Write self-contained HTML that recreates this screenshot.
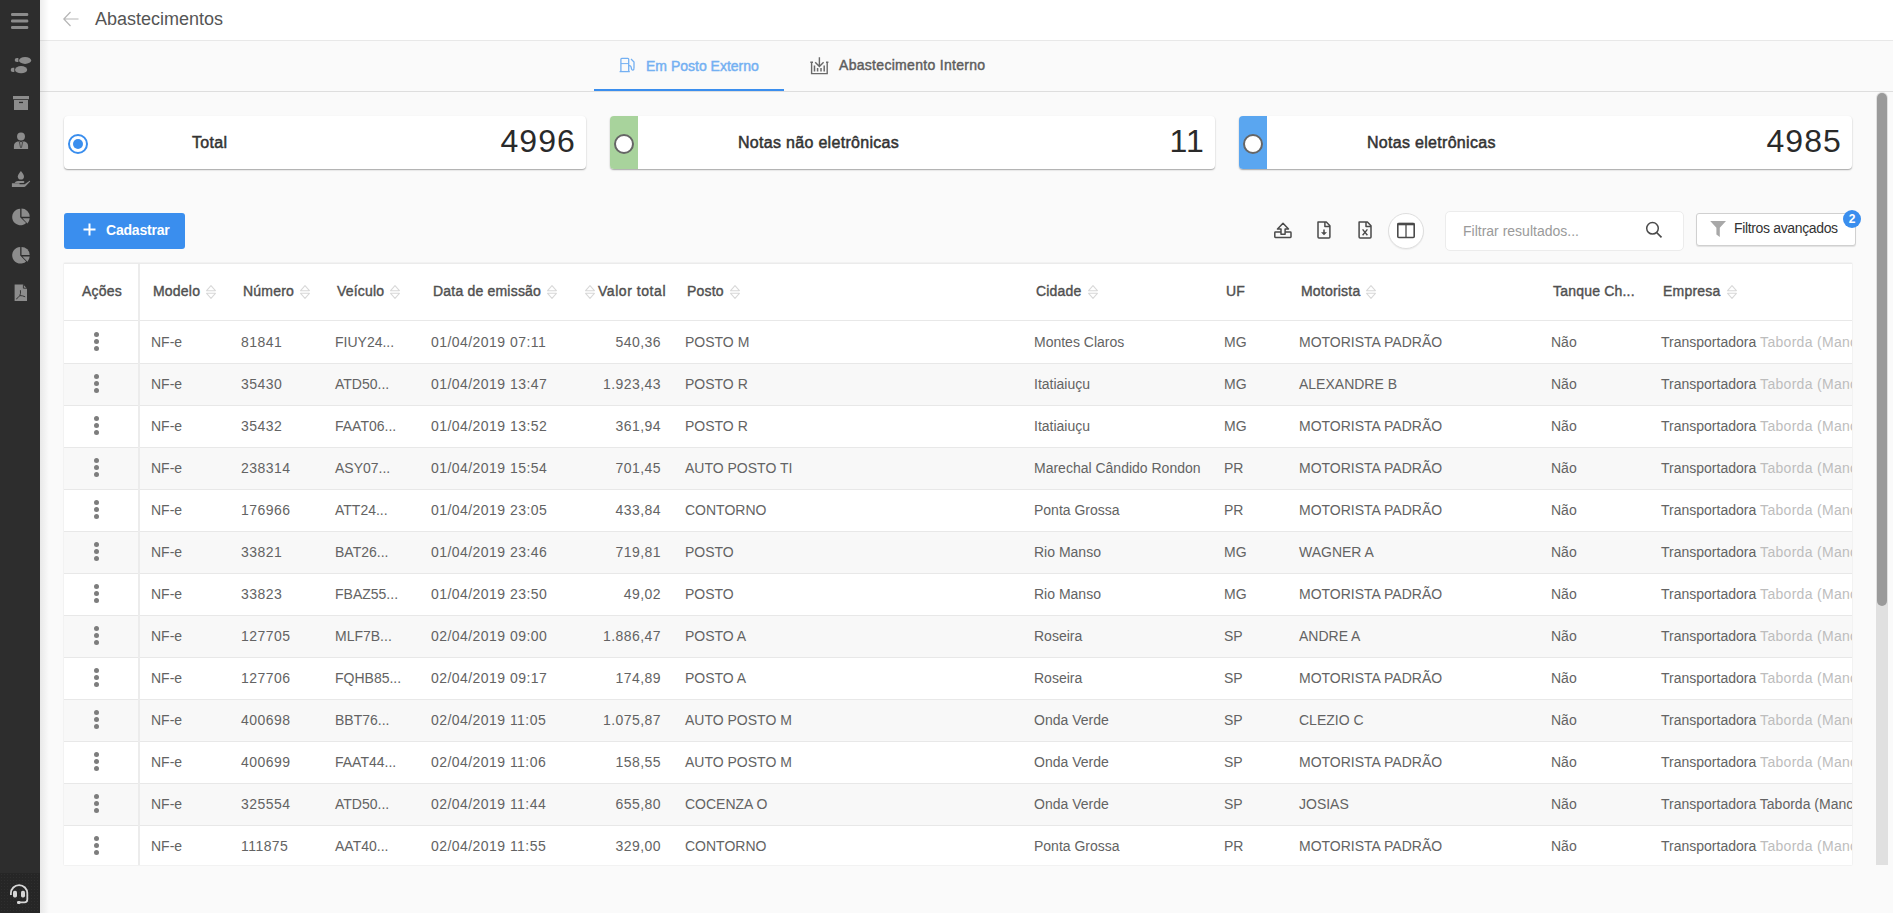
<!DOCTYPE html>
<html><head><meta charset="utf-8">
<style>
*{box-sizing:border-box;margin:0;padding:0}
html,body{width:1893px;height:913px;overflow:hidden;background:#fafafa;font-family:"Liberation Sans",sans-serif;color:#555}
.abs{position:absolute}
#side{left:0;top:0;width:40px;height:913px;background:#2d2d2d}
#side svg{position:absolute}
#sidebot{left:0;top:873px;width:40px;height:40px;background-color:#262626;background-image:radial-gradient(rgba(255,255,255,.045) 0.6px,transparent 0.7px);background-size:3px 3px}
#sideshadow{z-index:10;left:40px;top:0;width:9px;height:913px;background:linear-gradient(to right,rgba(0,0,0,.07),rgba(0,0,0,0))}
#header{left:40px;top:0;width:1853px;height:41px;background:#fff;border-bottom:1px solid #e8e8e8}
#title{left:95px;top:8px;font-size:18px;color:#555;line-height:22px}
#tabs{left:40px;top:41px;width:1853px;height:51px;border-bottom:1px solid #dedede}
.tab{position:absolute;font-size:14px;font-weight:normal;-webkit-text-stroke:0.45px currentColor;line-height:16px;white-space:nowrap}
.card{position:absolute;background:#fff;border-radius:4px;box-shadow:0 1px 1.5px rgba(0,0,0,.35);overflow:hidden}
.strip{position:absolute;left:0;top:0;width:28px;height:100%}
.radio{position:absolute;left:4px;top:18px;width:20px;height:20px;border-radius:50%;border:2px solid #666;background:#fff}
.radio.on{border-color:#3a8eee}
.radio.on:after{content:"";position:absolute;left:3px;top:3px;width:10px;height:10px;border-radius:50%;background:#3a8eee}
.ctitle{position:absolute;left:128px;top:18px;font-size:16px;font-weight:normal;-webkit-text-stroke:0.5px currentColor;letter-spacing:0.3px;color:#333;line-height:18px;white-space:nowrap}
.cnum{position:absolute;right:10px;top:7px;font-size:32px;color:#2a2a2a;line-height:36px;letter-spacing:1.1px}
#btn{left:64px;top:213px;width:121px;height:36px;background:#3a8eee;border-radius:3px;color:#fff;font-weight:bold;font-size:14px}
#table{left:64px;top:263px;width:1788px;height:602px;background:#fff;overflow:hidden;box-shadow:0 0 1.5px rgba(0,0,0,.12)}
.hrow{position:absolute;left:0;top:0;width:1789px;height:58px;border-bottom:1px solid #e8e8e8;background:#fff}
.tline{position:absolute;left:0;top:0;width:1789px;height:1px;background:#ebebeb;z-index:4}
.vdiv{position:absolute;left:74px;top:0;width:2px;height:603px;background:#ececec;z-index:3}
.row{position:absolute;left:0;width:1789px;height:42px;border-bottom:1px solid #e8e8e8;background:#fff}
.row.alt{background:#f8f8f8}
.c{position:absolute;top:0;line-height:41px;font-size:14px;color:#636363;white-space:nowrap}
.c.n{letter-spacing:0.45px}
.blur{color:#bdbdbd;letter-spacing:0.3px}
.h{position:absolute;font-size:14px;font-weight:normal;-webkit-text-stroke:0.4px currentColor;color:#505050;letter-spacing:0.2px;white-space:nowrap;top:20px;line-height:16px}
.srt{display:inline-block;vertical-align:-3px;margin-left:2px}
.dots{position:absolute;top:10px;width:6px;height:20px}
.dots i{display:block;width:5.2px;height:5.2px;border-radius:50%;background:#7d7d7d;margin-bottom:1.6px}
#sbtrack{left:1876px;top:92px;width:12px;height:773px;background:#e0e0e0;border-radius:6px 6px 0 0}
#sbthumb{left:1877px;top:93px;width:10px;height:513px;background:#9a9a9a;border-radius:5px}

</style></head><body>
<div id="side" class="abs">
<svg width="40" height="320" viewBox="0 0 40 320" style="left:0;top:0">
<g fill="#8c8c8c">
<rect x="11" y="13" width="17.3" height="3" rx="1.2"/><rect x="11" y="19.5" width="17.3" height="3" rx="1.2"/><rect x="11" y="26" width="17.3" height="3" rx="1.2"/>
<ellipse cx="25.1" cy="60.4" rx="6.1" ry="3.5"/><path d="M18.4 57.9 V61.9 H17 A2.3 2 0 0 1 17 57.9 Z"/>
<ellipse cx="21.1" cy="69.7" rx="6.1" ry="3.6"/><path d="M14.3 67.8 V72 H12.9 A2.2 2.1 0 0 1 12.9 67.8 Z"/>
<rect x="13" y="96" width="16" height="3.2"/><rect x="14" y="100" width="14" height="10"/>
<rect x="19" y="101.8" width="4" height="1.3" fill="#2d2d2d"/>
<circle cx="21" cy="136.5" r="3.95"/>
<path d="M13.9 148.9 V146.2 Q13.9 142.6 17.4 141.6 L20 141.6 L21 142.6 L22 141.6 L24.6 141.6 Q28.1 142.6 28.1 146.2 V148.9 Z"/>
<path d="M19.3 141.8 L20.6 147.8 M22.7 141.8 L21.4 147.8" stroke="#2d2d2d" stroke-width="0.7" fill="none"/>
<path d="M20.9 171 Q17.8 175 17.8 176.4 A3.1 3.1 0 0 0 24 176.4 Q24 175 20.9 171 Z"/>
<path d="M11.9 183.2 H19.5 V184.2 H24.6 L29.3 180.9 Q30.3 180.4 30.1 181.4 L25.6 186.3 Q25 187 24.1 187 H11.9 Z"/>
<path d="M14.6 183 Q15.6 181 17.8 181 H23.4 Q24.4 181 24.4 182 Q24.4 183.1 23.4 183.1 H19.6 Z"/>
<path d="M20.2 208.7 A8.3 8.3 0 1 0 26.1 223.1 L20.2 217.2 Z"/>
<path d="M21.5 208.6 A8.2 8.2 0 0 1 29.7 216.8 L21.5 216.8 Z"/>
<path d="M22.4 218.3 H29.7 A8.3 8.3 0 0 1 27.4 223.4 Z"/>
<path d="M20.2 247 A8.3 8.3 0 1 0 26.1 261.4 L20.2 255.5 Z"/>
<path d="M21.5 246.9 A8.2 8.2 0 0 1 29.7 255.1 L21.5 255.1 Z"/>
<path d="M22.4 256.6 H29.7 A8.3 8.3 0 0 1 27.4 261.7 Z"/>
<path d="M14.6 284.6 H23.2 L27 288.4 V301 H14.6 Z"/>
</g>
<path d="M23.4 284.6 V288.2 H27" fill="none" stroke="#2d2d2d" stroke-width="0.9"/>
<path d="M20.4 290.2 Q20.9 293.6 19.8 295.6 Q18.2 297.8 16.2 299 M19.8 295.6 Q22.2 295.4 25.2 296.8" fill="none" stroke="#2d2d2d" stroke-width="0.9"/>
</svg>
</div>
<div id="sidebot" class="abs"><svg width="40" height="40" viewBox="0 0 40 40" style="position:absolute;left:0;top:0">
<path d="M10.9 22 V20.3 A8.2 8.2 0 0 1 27.3 20.3 V26.5 Q27.3 29.4 24.4 29.4 H18" fill="none" stroke="#d6d6d6" stroke-width="1.8"/>
<rect x="13" y="17.8" width="4" height="6.6" rx="1.6" fill="#d6d6d6"/><rect x="21" y="17.8" width="4" height="6.6" rx="1.6" fill="#d6d6d6"/>
<rect x="17" y="28" width="3.5" height="3" rx="1.2" fill="#d6d6d6"/>
</svg></div>
<div id="sideshadow" class="abs"></div>

<div id="header" class="abs"></div>
<svg class="abs" style="left:63px;top:11px" width="16" height="16" viewBox="0 0 16 16"><path d="M15.5 8 H1 M7.5 1 L0.8 8 L7.5 15" fill="none" stroke="#b5b5b5" stroke-width="1.2"/></svg>
<div id="title" class="abs">Abastecimentos</div>
<div id="tabs" class="abs"></div>
<div class="abs" style="left:594px;top:89px;width:190px;height:2px;background:#3a8eee"></div>
<div class="tab" style="left:646px;top:58px;color:#74b0f2">Em Posto Externo</div>
<div class="tab" style="left:839px;top:57px;color:#5e5e5e;letter-spacing:0.3px">Abastecimento Interno</div>
<div class="card" style="left:64px;top:116px;width:522px;height:53px"><div class="radio on"></div><div class="ctitle">Total</div><div class="cnum">4996</div></div>
<div class="card" style="left:610px;top:116px;width:605px;height:53px"><div class="strip" style="background:#a8d39c"></div><div class="radio"></div><div class="ctitle">Notas não eletrônicas</div><div class="cnum">11</div></div>
<div class="card" style="left:1239px;top:116px;width:613px;height:53px"><div class="strip" style="background:#5aa6f0"></div><div class="radio"></div><div class="ctitle">Notas eletrônicas</div><div class="cnum">4985</div></div>
<div id="btn" class="abs"><svg class="abs" style="left:19px;top:10px" width="13" height="13" viewBox="0 0 13 13"><path d="M6.5 0.5 V12.5 M0.5 6.5 H12.5" stroke="#fff" stroke-width="2"/></svg><span class="abs" style="left:42px;top:9px;line-height:16px;letter-spacing:-0.2px">Cadastrar</span></div>
<div class="abs" style="left:1445px;top:211px;width:239px;height:40px;background:#fff;border:1px solid #ececec;border-radius:5px"></div>
<div class="abs" style="left:1463px;top:223px;font-size:14px;color:#9a9a9a;line-height:16px">Filtrar resultados...</div>
<div class="abs" style="left:1696px;top:213px;width:160px;height:33px;background:#fff;border:1px solid #d0d0d0;border-radius:3px;box-shadow:0 1px 1px rgba(0,0,0,.1)"></div>
<div class="abs" style="left:1734px;top:220px;font-size:14px;color:#333;line-height:16px;letter-spacing:-0.35px">Filtros avançados</div>
<div class="abs" style="left:1843px;top:210px;width:18px;height:18px;border-radius:50%;background:#3a8eee;color:#fff;font-size:12px;font-weight:bold;text-align:center;line-height:18px">2</div>
<div class="abs" style="left:1388px;top:213px;width:36px;height:36px;border-radius:50%;background:#fff;border:1px solid #dedede;box-shadow:0 1px 1px rgba(0,0,0,.05)"></div>
<svg class="abs" style="left:612px;top:52px" width="30" height="26" viewBox="612 52 30 26"><g fill="none" stroke="#74b0f2" stroke-width="1.3"><path d="M620.9 71.3 V59.2 Q620.9 58.3 621.8 58.3 H627.9 Q628.7 58.3 628.7 59.2 V71.3"/><path d="M619.6 71.6 H629.8"/><path d="M621 63.6 H628.6" stroke-width="1"/><path d="M628.7 65.6 Q631 65.3 631.3 67.8 Q631.7 70.4 633 70.2 Q634.1 70 634 67.5 V62 L631 59"/></g></svg>
<svg class="abs" style="left:804px;top:50px" width="30" height="30" viewBox="804 50 30 30"><g fill="none" stroke="#6a6a6a" stroke-width="1.4"><path d="M810.3 62.2 H813 M826 62.2 H828.4 M811.6 62.2 V73.6 H827.2 V62.2"/><path d="M819.4 57.2 V66.6 M815.2 62.2 L819.4 66.6 L823.6 62.2"/><path d="M814.5 65.4 V71.6 M817.6 68 V71.6 M821 68 V71.6 M824.2 65.4 V71.6" stroke-width="1.5"/></g></svg>
<svg class="abs" style="left:1270px;top:216px" width="30" height="28" viewBox="1270 216 30 28"><g fill="none" stroke="#4a4a4a" stroke-width="1.5" stroke-linejoin="round"><path d="M1283 223.3 L1277.5 229.1 H1281 V234.3 H1285.1 V229.1 H1288.5 Z"/><path d="M1281 232 H1275.4 Q1274.8 232 1274.8 232.7 V236.7 Q1274.8 237.4 1275.4 237.4 H1290.4 Q1291 237.4 1291 236.7 V232.7 Q1291 232 1290.4 232 H1285.1"/></g></svg>
<svg class="abs" style="left:1310px;top:216px" width="70" height="28" viewBox="1310 216 70 28"><g fill="none" stroke="#4a4a4a" stroke-width="1.5" stroke-linejoin="round"><path d="M1318 221.9 H1326.3 L1329.9 225.7 V237 Q1329.9 238 1328.9 238 H1319 Q1318 238 1318 237 Z M1324.9 222 V226.6 H1329.8"/><path d="M1324 229.5 V233.5"/><path d="M1359.1 221.9 H1367.4 L1371 225.7 V237 Q1371 238 1370 238 H1360.1 Q1359.1 238 1359.1 237 Z M1366 222 V226.6 H1370.9"/><path d="M1362.6 229.4 L1367.4 235.3 M1367.4 229.4 L1362.6 235.3" stroke-width="1.4"/></g><path d="M1321 232.2 H1327 L1324 235.2 Z" fill="#4a4a4a"/></svg>
<svg class="abs" style="left:1386px;top:212px" width="40" height="38" viewBox="1386 212 40 38"><g fill="none" stroke="#4a4a4a" stroke-width="1.6"><rect x="1397.8" y="223.6" width="16.4" height="13.9" rx="1"/><path d="M1397.5 224.1 H1414.5" stroke-width="2.4"/><path d="M1406 224 V237.5" stroke-width="1.3"/></g></svg>
<svg class="abs" style="left:1636px;top:214px" width="30" height="30" viewBox="1636 214 30 30"><g fill="none" stroke="#4a4a4a" stroke-width="1.5"><circle cx="1652.5" cy="228.3" r="5.8"/><path d="M1656.6 232.5 L1661.5 237.3" stroke-width="1.7"/></g></svg>
<svg class="abs" style="left:1706px;top:216px" width="24" height="24" viewBox="1706 216 24 24"><path d="M1710.2 221 H1726 L1719.8 227.8 V237 L1716.4 234.6 V227.8 Z" fill="#a8a8a8"/></svg>

<div id="table" class="abs">
<div class="hrow"><div class="h" style="left:18px">Ações</div><div class="h" style="left:89px">Modelo <span class=srt><svg width="10" height="14" viewBox="0 0 10 14"><path d="M0.6 5.7 L5 0.7 L9.4 5.7 Z M0.6 8.3 L5 13.3 L9.4 8.3 Z" fill="none" stroke="#d8d8d8" stroke-width="1.1" stroke-linejoin="round"/></svg></span></div><div class="h" style="left:179px">Número <span class=srt><svg width="10" height="14" viewBox="0 0 10 14"><path d="M0.6 5.7 L5 0.7 L9.4 5.7 Z M0.6 8.3 L5 13.3 L9.4 8.3 Z" fill="none" stroke="#d8d8d8" stroke-width="1.1" stroke-linejoin="round"/></svg></span></div><div class="h" style="left:273px">Veículo <span class=srt><svg width="10" height="14" viewBox="0 0 10 14"><path d="M0.6 5.7 L5 0.7 L9.4 5.7 Z M0.6 8.3 L5 13.3 L9.4 8.3 Z" fill="none" stroke="#d8d8d8" stroke-width="1.1" stroke-linejoin="round"/></svg></span></div><div class="h" style="left:369px">Data de emissão <span class=srt><svg width="10" height="14" viewBox="0 0 10 14"><path d="M0.6 5.7 L5 0.7 L9.4 5.7 Z M0.6 8.3 L5 13.3 L9.4 8.3 Z" fill="none" stroke="#d8d8d8" stroke-width="1.1" stroke-linejoin="round"/></svg></span></div><div class="h" style="left:623px">Posto <span class=srt><svg width="10" height="14" viewBox="0 0 10 14"><path d="M0.6 5.7 L5 0.7 L9.4 5.7 Z M0.6 8.3 L5 13.3 L9.4 8.3 Z" fill="none" stroke="#d8d8d8" stroke-width="1.1" stroke-linejoin="round"/></svg></span></div><div class="h" style="left:972px">Cidade <span class=srt><svg width="10" height="14" viewBox="0 0 10 14"><path d="M0.6 5.7 L5 0.7 L9.4 5.7 Z M0.6 8.3 L5 13.3 L9.4 8.3 Z" fill="none" stroke="#d8d8d8" stroke-width="1.1" stroke-linejoin="round"/></svg></span></div><div class="h" style="left:1162px">UF</div><div class="h" style="left:1237px">Motorista <span class=srt><svg width="10" height="14" viewBox="0 0 10 14"><path d="M0.6 5.7 L5 0.7 L9.4 5.7 Z M0.6 8.3 L5 13.3 L9.4 8.3 Z" fill="none" stroke="#d8d8d8" stroke-width="1.1" stroke-linejoin="round"/></svg></span></div><div class="h" style="left:1489px">Tanque Ch...</div><div class="h" style="left:1599px">Empresa <span class=srt><svg width="10" height="14" viewBox="0 0 10 14"><path d="M0.6 5.7 L5 0.7 L9.4 5.7 Z M0.6 8.3 L5 13.3 L9.4 8.3 Z" fill="none" stroke="#d8d8d8" stroke-width="1.1" stroke-linejoin="round"/></svg></span></div><div class="h" style="left:521px"><span class=srt style="margin-left:0;margin-right:3px"><svg width="10" height="14" viewBox="0 0 10 14"><path d="M0.6 5.7 L5 0.7 L9.4 5.7 Z M0.6 8.3 L5 13.3 L9.4 8.3 Z" fill="none" stroke="#d8d8d8" stroke-width="1.1" stroke-linejoin="round"/></svg></span><span style="letter-spacing:0.55px">Valor total</span></div></div>
<div class="vdiv"></div><div class="tline"></div>
<div class="row" style="top:59px"><div class="dots" style="left:30px"><i></i><i></i><i></i></div><div class="c" style="left:87px">NF-e</div><div class="c n" style="left:177px">81841</div><div class="c" style="left:271px">FIUY24...</div><div class="c n" style="left:367px">01/04/2019 07:11</div><div class="c n" style="right:1192px">540,36</div><div class="c" style="left:621px">POSTO M</div><div class="c" style="left:970px">Montes Claros</div><div class="c" style="left:1160px">MG</div><div class="c" style="left:1235px">MOTORISTA PADRÃO</div><div class="c" style="left:1487px">Não</div><div class="c" style="left:1597px">Transportadora <span class="blur">Taborda (Manc</span></div></div><div class="row alt" style="top:101px"><div class="dots" style="left:30px"><i></i><i></i><i></i></div><div class="c" style="left:87px">NF-e</div><div class="c n" style="left:177px">35430</div><div class="c" style="left:271px">ATD50...</div><div class="c n" style="left:367px">01/04/2019 13:47</div><div class="c n" style="right:1192px">1.923,43</div><div class="c" style="left:621px">POSTO R</div><div class="c" style="left:970px">Itatiaiuçu</div><div class="c" style="left:1160px">MG</div><div class="c" style="left:1235px">ALEXANDRE B</div><div class="c" style="left:1487px">Não</div><div class="c" style="left:1597px">Transportadora <span class="blur">Taborda (Manc</span></div></div><div class="row" style="top:143px"><div class="dots" style="left:30px"><i></i><i></i><i></i></div><div class="c" style="left:87px">NF-e</div><div class="c n" style="left:177px">35432</div><div class="c" style="left:271px">FAAT06...</div><div class="c n" style="left:367px">01/04/2019 13:52</div><div class="c n" style="right:1192px">361,94</div><div class="c" style="left:621px">POSTO R</div><div class="c" style="left:970px">Itatiaiuçu</div><div class="c" style="left:1160px">MG</div><div class="c" style="left:1235px">MOTORISTA PADRÃO</div><div class="c" style="left:1487px">Não</div><div class="c" style="left:1597px">Transportadora <span class="blur">Taborda (Manc</span></div></div><div class="row alt" style="top:185px"><div class="dots" style="left:30px"><i></i><i></i><i></i></div><div class="c" style="left:87px">NF-e</div><div class="c n" style="left:177px">238314</div><div class="c" style="left:271px">ASY07...</div><div class="c n" style="left:367px">01/04/2019 15:54</div><div class="c n" style="right:1192px">701,45</div><div class="c" style="left:621px">AUTO POSTO TI</div><div class="c" style="left:970px">Marechal Cândido Rondon</div><div class="c" style="left:1160px">PR</div><div class="c" style="left:1235px">MOTORISTA PADRÃO</div><div class="c" style="left:1487px">Não</div><div class="c" style="left:1597px">Transportadora <span class="blur">Taborda (Manc</span></div></div><div class="row" style="top:227px"><div class="dots" style="left:30px"><i></i><i></i><i></i></div><div class="c" style="left:87px">NF-e</div><div class="c n" style="left:177px">176966</div><div class="c" style="left:271px">ATT24...</div><div class="c n" style="left:367px">01/04/2019 23:05</div><div class="c n" style="right:1192px">433,84</div><div class="c" style="left:621px">CONTORNO</div><div class="c" style="left:970px">Ponta Grossa</div><div class="c" style="left:1160px">PR</div><div class="c" style="left:1235px">MOTORISTA PADRÃO</div><div class="c" style="left:1487px">Não</div><div class="c" style="left:1597px">Transportadora <span class="blur">Taborda (Manc</span></div></div><div class="row alt" style="top:269px"><div class="dots" style="left:30px"><i></i><i></i><i></i></div><div class="c" style="left:87px">NF-e</div><div class="c n" style="left:177px">33821</div><div class="c" style="left:271px">BAT26...</div><div class="c n" style="left:367px">01/04/2019 23:46</div><div class="c n" style="right:1192px">719,81</div><div class="c" style="left:621px">POSTO</div><div class="c" style="left:970px">Rio Manso</div><div class="c" style="left:1160px">MG</div><div class="c" style="left:1235px">WAGNER A</div><div class="c" style="left:1487px">Não</div><div class="c" style="left:1597px">Transportadora <span class="blur">Taborda (Manc</span></div></div><div class="row" style="top:311px"><div class="dots" style="left:30px"><i></i><i></i><i></i></div><div class="c" style="left:87px">NF-e</div><div class="c n" style="left:177px">33823</div><div class="c" style="left:271px">FBAZ55...</div><div class="c n" style="left:367px">01/04/2019 23:50</div><div class="c n" style="right:1192px">49,02</div><div class="c" style="left:621px">POSTO</div><div class="c" style="left:970px">Rio Manso</div><div class="c" style="left:1160px">MG</div><div class="c" style="left:1235px">MOTORISTA PADRÃO</div><div class="c" style="left:1487px">Não</div><div class="c" style="left:1597px">Transportadora <span class="blur">Taborda (Manc</span></div></div><div class="row alt" style="top:353px"><div class="dots" style="left:30px"><i></i><i></i><i></i></div><div class="c" style="left:87px">NF-e</div><div class="c n" style="left:177px">127705</div><div class="c" style="left:271px">MLF7B...</div><div class="c n" style="left:367px">02/04/2019 09:00</div><div class="c n" style="right:1192px">1.886,47</div><div class="c" style="left:621px">POSTO A</div><div class="c" style="left:970px">Roseira</div><div class="c" style="left:1160px">SP</div><div class="c" style="left:1235px">ANDRE A</div><div class="c" style="left:1487px">Não</div><div class="c" style="left:1597px">Transportadora <span class="blur">Taborda (Manc</span></div></div><div class="row" style="top:395px"><div class="dots" style="left:30px"><i></i><i></i><i></i></div><div class="c" style="left:87px">NF-e</div><div class="c n" style="left:177px">127706</div><div class="c" style="left:271px">FQHB85...</div><div class="c n" style="left:367px">02/04/2019 09:17</div><div class="c n" style="right:1192px">174,89</div><div class="c" style="left:621px">POSTO A</div><div class="c" style="left:970px">Roseira</div><div class="c" style="left:1160px">SP</div><div class="c" style="left:1235px">MOTORISTA PADRÃO</div><div class="c" style="left:1487px">Não</div><div class="c" style="left:1597px">Transportadora <span class="blur">Taborda (Manc</span></div></div><div class="row alt" style="top:437px"><div class="dots" style="left:30px"><i></i><i></i><i></i></div><div class="c" style="left:87px">NF-e</div><div class="c n" style="left:177px">400698</div><div class="c" style="left:271px">BBT76...</div><div class="c n" style="left:367px">02/04/2019 11:05</div><div class="c n" style="right:1192px">1.075,87</div><div class="c" style="left:621px">AUTO POSTO M</div><div class="c" style="left:970px">Onda Verde</div><div class="c" style="left:1160px">SP</div><div class="c" style="left:1235px">CLEZIO C</div><div class="c" style="left:1487px">Não</div><div class="c" style="left:1597px">Transportadora <span class="blur">Taborda (Manc</span></div></div><div class="row" style="top:479px"><div class="dots" style="left:30px"><i></i><i></i><i></i></div><div class="c" style="left:87px">NF-e</div><div class="c n" style="left:177px">400699</div><div class="c" style="left:271px">FAAT44...</div><div class="c n" style="left:367px">02/04/2019 11:06</div><div class="c n" style="right:1192px">158,55</div><div class="c" style="left:621px">AUTO POSTO M</div><div class="c" style="left:970px">Onda Verde</div><div class="c" style="left:1160px">SP</div><div class="c" style="left:1235px">MOTORISTA PADRÃO</div><div class="c" style="left:1487px">Não</div><div class="c" style="left:1597px">Transportadora <span class="blur">Taborda (Manc</span></div></div><div class="row alt" style="top:521px"><div class="dots" style="left:30px"><i></i><i></i><i></i></div><div class="c" style="left:87px">NF-e</div><div class="c n" style="left:177px">325554</div><div class="c" style="left:271px">ATD50...</div><div class="c n" style="left:367px">02/04/2019 11:44</div><div class="c n" style="right:1192px">655,80</div><div class="c" style="left:621px">COCENZA O</div><div class="c" style="left:970px">Onda Verde</div><div class="c" style="left:1160px">SP</div><div class="c" style="left:1235px">JOSIAS</div><div class="c" style="left:1487px">Não</div><div class="c" style="left:1597px">Transportadora Taborda (Manc</div></div><div class="row" style="top:563px"><div class="dots" style="left:30px"><i></i><i></i><i></i></div><div class="c" style="left:87px">NF-e</div><div class="c n" style="left:177px">111875</div><div class="c" style="left:271px">AAT40...</div><div class="c n" style="left:367px">02/04/2019 11:55</div><div class="c n" style="right:1192px">329,00</div><div class="c" style="left:621px">CONTORNO</div><div class="c" style="left:970px">Ponta Grossa</div><div class="c" style="left:1160px">PR</div><div class="c" style="left:1235px">MOTORISTA PADRÃO</div><div class="c" style="left:1487px">Não</div><div class="c" style="left:1597px">Transportadora <span class="blur">Taborda (Manc</span></div></div>
</div>
<div id="sbtrack" class="abs"></div><div id="sbthumb" class="abs"></div>
</body></html>
